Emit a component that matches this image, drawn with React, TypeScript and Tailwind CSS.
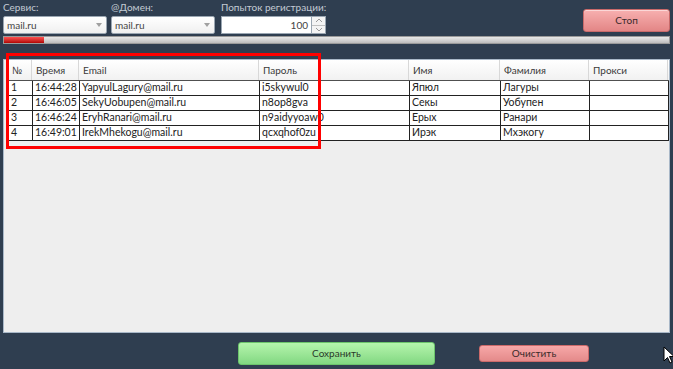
import React from "react";

const cols = "grid-cols-[24px_47px_180px_150px_91px_89px_79px]";
const headers = ["№", "Время", "Email", "Пароль", "Имя", "Фамилия", "Прокси"];
const rows = [
  ["1", "16:44:28", "YapyulLagury@mail.ru", "i5skywul0", "Япюл", "Лагуры", ""],
  ["2", "16:46:05", "SekyUobupen@mail.ru", "n8op8gva", "Секы", "Уобупен", ""],
  ["3", "16:46:24", "EryhRanari@mail.ru", "n9aidyyoaw0", "Ерых", "Ранари", ""],
  ["4", "16:49:01", "IrekMhekogu@mail.ru", "qcxqhof0zu", "Ирэк", "Мхэкогу", ""],
];

function Combo({ value }: { value: string }) {
  return (
    <div className="w-[104px] h-[18px] flex items-center justify-between bg-gradient-to-b from-[#ffffff] to-[#f0f0f0] border border-[#9aa6b2] rounded-[2px] pl-[3px] pr-[4px]">
      <span className="text-[10px] text-[#444]">{value}</span>
      <svg width="6" height="4" viewBox="0 0 6 4">
        <path d="M0 0 L6 0 L3 4 Z" fill="#a0a0a0" />
      </svg>
    </div>
  );
}

export default function App() {
  return (
    <div
      className="w-[673px] h-[369px] bg-[#2f3e50] relative overflow-hidden flex flex-col"
      style={{ fontFamily: 'Lato, "Open Sans", sans-serif' }}
    >
      {/* top */}
      <div className="flex items-start pl-[3px] pr-[3px] pt-[1px] h-[35px]">
        <div className="flex flex-col w-[108px]">
          <span className="text-[10px] leading-[13px] text-[#c3cbd4]">Сервис:</span>
          <div className="mt-[2px]"><Combo value="mail.ru" /></div>
        </div>
        <div className="flex flex-col w-[110px]">
          <span className="text-[10px] leading-[13px] text-[#c3cbd4]">@Домен:</span>
          <div className="mt-[2px]"><Combo value="mail.ru" /></div>
        </div>
        <div className="flex flex-col">
          <span className="text-[10px] leading-[13px] text-[#c3cbd4]">Попыток регистрации:</span>
          <div className="mt-[2px] flex h-[18px]">
            <div className="w-[91px] h-full bg-white border border-[#9aa6b2] flex items-center justify-end pr-[3px]">
              <span className="text-[10px] text-[#444]">100</span>
            </div>
            <div className="w-[14px] h-full flex flex-col border border-l-0 border-[#9aa6b2] bg-[#f4f4f4]">
              <div className="flex-1 flex items-center justify-center border-b border-[#c0c0c0]">
                <svg width="6" height="3" viewBox="0 0 6 3"><path d="M0 3 L3 0 L6 3" fill="none" stroke="#999" /></svg>
              </div>
              <div className="flex-1 flex items-center justify-center">
                <svg width="6" height="3" viewBox="0 0 6 3"><path d="M0 0 L3 3 L6 0" fill="none" stroke="#999" /></svg>
              </div>
            </div>
          </div>
        </div>
        <div className="flex-1" />
        <div className="mt-[8px] w-[87px] h-[23px] rounded-[3px] border border-[#c86a6a] bg-gradient-to-b from-[#f7b0b0] to-[#e38686] flex items-center justify-center shadow-[inset_0_1px_0_rgba(255,255,255,0.5)]">
          <span className="text-[10px] text-[#3a2a2a]">Стоп</span>
        </div>
      </div>

      {/* progress */}
      <div className="mx-[3px] mt-[1px] h-[8px] border border-[#9a9a9a] bg-gradient-to-b from-[#e8e8e8] via-[#d4d4d4] to-[#bdbdbd] relative">
        <div className="absolute left-0 top-0 bottom-0 w-[40px] bg-gradient-to-b from-[#ff5050] to-[#b00000]" />
      </div>

      {/* panel */}
      <div className="mx-[3px] mt-[15px] h-[274px] bg-[#eeeeee] border border-[#a9b8c8] pl-[4px]">
        <div className={`grid ${cols} h-[21px] bg-gradient-to-b from-[#ffffff] to-[#f1f1f1] border-b border-[#505050]`}>
          {headers.map((h, i) => (
            <div
              key={i}
              className="flex items-center pl-[4px] border-r border-[#d8d8d8] text-[10px] text-[#3a3a3a]"
              style={i === 0 ? { fontFamily: '"Open Sans", sans-serif' } : undefined}
            >
              {h}
            </div>
          ))}
        </div>
        <div className="border-l border-[#222]">
          {rows.map((r, ri) => (
            <div key={ri} className={`grid ${cols} h-[15px] bg-white border-b border-[#222]`}>
              {r.map((c, ci) => (
                <div key={ci} className="flex items-center pl-[2px] border-r border-[#222] text-[10.5px] text-[#222] whitespace-nowrap overflow-hidden">
                  {c}
                </div>
              ))}
            </div>
          ))}
        </div>
      </div>

      {/* bottom buttons */}
      <div className="flex items-center h-[36px] pt-[4px] pl-[238px]">
        <div className="w-[197px] h-[23px] rounded-[3px] border border-[#6cc46c] bg-gradient-to-b from-[#b5f5ad] to-[#82d882] flex items-center justify-center">
          <span className="text-[10px] text-[#2a3a2a]">Сохранить</span>
        </div>
        <div className="ml-[44px] w-[110px] h-[17px] rounded-[3px] border border-[#cc6a6a] bg-gradient-to-b from-[#f7a8a8] to-[#e48a8a] flex items-center justify-center">
          <span className="text-[10px] text-[#3a2a2a]">Очистить</span>
        </div>
      </div>

      {/* red highlight */}
      <div className="absolute left-[6px] top-[53px] w-[315px] h-[96px] border-[3px] border-[#ff0000]" />

      {/* cursor */}
      <svg className="absolute left-[663px] top-[346px]" width="12" height="18" viewBox="0 0 12 18">
        <path d="M1 1 L1 15 L4.5 11.5 L7 17 L9 16 L6.5 10.5 L11 10.5 Z" fill="#fff" stroke="#000" strokeWidth="1" />
      </svg>
    </div>
  );
}
